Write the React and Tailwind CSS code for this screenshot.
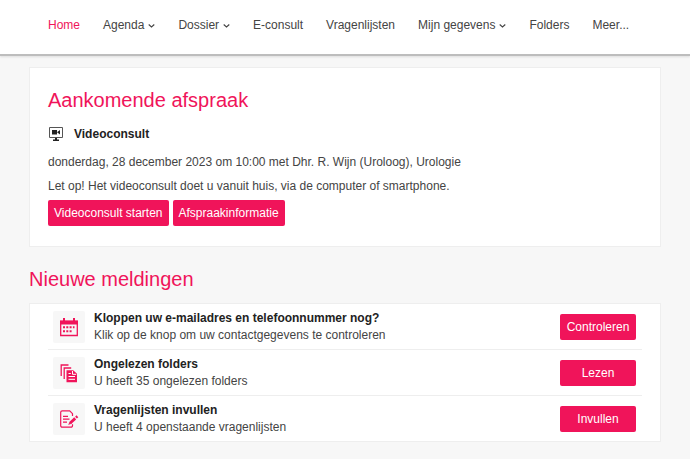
import React from 'react';

const menu = [
  { label: 'Home', active: true },
  { label: 'Agenda', sub: true },
  { label: 'Dossier', sub: true },
  { label: 'E-consult' },
  { label: 'Vragenlijsten' },
  { label: 'Mijn gegevens', sub: true },
  { label: 'Folders' },
  { label: 'Meer...' },
];

const Chevron = () => (
  <svg className="w-[7px] h-[7px]" viewBox="0 0 7 7" fill="none" stroke="currentColor" strokeWidth="1.1">
    <path d="M0.7 2.5 3.5 5l2.8-2.5" />
  </svg>
);

const VideoIcon = () => (
  <svg className="w-4 h-4 text-[#222222]" viewBox="0 0 16 16" fill="none">
    <path d="M1.500 1.500h13v10h-13z" stroke="#555555" strokeWidth="1" />
    <path d="M4 4h5v4.500H4zM9 6.200 12 4v4.500z" fill="currentColor" />
    <path d="M7 12h2v1.600h2v1.400H5v-1.400h2z" fill="currentColor" />
  </svg>
);

const CalendarIcon = () => (
  <svg className="w-5 h-5" viewBox="0 0 20 20" fill="none">
    <path d="M1.700 4.500h16.600v14H1.700z" stroke="currentColor" strokeWidth="1.300" />
    <path d="M1 3.500h18v4H1zM4 1h2v4H4zM14 1h2v4h-2z" fill="currentColor" />
    <path
      d="M4 9.300h2v2H4zM7.300 9.300h2v2h-2zM10.600 9.300h2v2h-2zM13.900 9.300h1.600v2h-1.600zM4 13.300h2v2H4zM7.300 13.300h2v2h-2zM10.600 13.300h2v2h-2z"
      fill="currentColor"
    />
  </svg>
);

const FoldersIcon = () => (
  <svg className="w-5 h-5" viewBox="0 0 20 20" fill="none">
    <path d="M2.200 13V2h7.300M5.200 16V5h7" stroke="currentColor" strokeWidth="1.300" />
    <path d="M7.500 7.200h6.700l3.800 3.600v8.400H7.500z" fill="currentColor" />
    <path d="M13.500 8v3.300h3.700M9.500 13.500h6.500M9.500 16.300h6.500M9.500 10.500h2.300" stroke="white" strokeWidth="1" />
  </svg>
);

const FormIcon = () => (
  <svg className="w-5 h-5" viewBox="0 0 20 20" fill="none" stroke="currentColor" strokeWidth="1.200">
    <path d="M13.500 7V4.700L10.700 1.800H3.200a1.500 1.500 0 0 0-1.500 1.500v13.400a1.500 1.500 0 0 0 1.500 1.500h8.800a1.500 1.500 0 0 0 1.500-1.500v-1.500" />
    <path d="M4 7.300h5M4 10.200h6.500M4 13.200h4" />
    <path d="m11.200 14 5-4.600" strokeWidth="2.800" />
    <path d="m17 8.600 1.400-1.300" strokeWidth="2.600" />
    <path d="m9.600 15.500 1.300-2.500 1.400 1.500z" fill="currentColor" strokeWidth="0.500" />
  </svg>
);

const meldingen = [
  {
    icon: CalendarIcon,
    titel: 'Kloppen uw e-mailadres en telefoonnummer nog?',
    tekst: 'Klik op de knop om uw contactgegevens te controleren',
    knop: 'Controleren',
  },
  {
    icon: FoldersIcon,
    titel: 'Ongelezen folders',
    tekst: 'U heeft 35 ongelezen folders',
    knop: 'Lezen',
  },
  {
    icon: FormIcon,
    titel: 'Vragenlijsten invullen',
    tekst: 'U heeft 4 openstaande vragenlijsten',
    knop: 'Invullen',
  },
];

const App = () => {
  return (
    <div className="min-h-screen bg-[#f7f7f7] text-[12px] text-[#444444] font-['Liberation_Sans',Arial,sans-serif]">
      <header className="bg-white border-b-2 border-[#bdbdbd] shadow-[0_1px_2px_#dddddd]">
        <nav className="flex items-center gap-[23px] h-[54px] px-12 pb-1">
          {menu.map((item) => (
            <a
              key={item.label}
              href="#"
              className={`flex items-center gap-1 whitespace-nowrap ${item.active ? 'text-[#f0145a]' : ''}`}
            >
              {item.label}
              {item.sub && <Chevron />}
            </a>
          ))}
        </nav>
      </header>

      <main className="px-[29px] pt-[11px] pb-4">
        {/* Afspraak */}
        <section className="bg-white border border-[#eeeeee] px-[18px] pt-5 pb-5">
          <h1 className="text-[20px] leading-6 text-[#f0145a]">Aankomende afspraak</h1>
          <div className="flex items-center gap-[10px] h-5 mt-3 font-bold text-[#222222]">
            <VideoIcon />
            Videoconsult
          </div>
          <p className="mt-2 leading-5">donderdag, 28 december 2023 om 10:00 met Dhr. R. Wijn (Uroloog), Urologie</p>
          <p className="mt-1 leading-5">Let op! Het videoconsult doet u vanuit huis, via de computer of smartphone.</p>
          <div className="flex gap-1 mt-1">
            <button className="h-[26px] px-[6px] rounded-xs bg-[#f0145a] text-white">Videoconsult starten</button>
            <button className="h-[26px] px-[6px] rounded-xs bg-[#f0145a] text-white">Afspraakinformatie</button>
          </div>
        </section>

        {/* Meldingen */}
        <h2 className="mt-5 text-[20px] leading-6 text-[#f0145a]">Nieuwe meldingen</h2>
        <ul className="mt-3 bg-white border border-[#eeeeee] px-[18px]">
          {meldingen.map((m) => (
            <li key={m.knop} className="flex items-center h-[46px] pl-[5px] pr-[6px] border-b border-[#eeeeee] last:h-[45px] last:border-b-0">
              <div className="flex items-center justify-center size-8 rounded-xs bg-[#f7f7f7] text-[#f0145a]">
                <m.icon />
              </div>
              <div className="flex-1 ml-[9px] leading-[17px]">
                <p className="font-bold text-[#222222]">{m.titel}</p>
                <p>{m.tekst}</p>
              </div>
              <button className="w-[76px] h-[26px] rounded-xs bg-[#f0145a] text-white">{m.knop}</button>
            </li>
          ))}
        </ul>
      </main>
    </div>
  );
};

export default App;
